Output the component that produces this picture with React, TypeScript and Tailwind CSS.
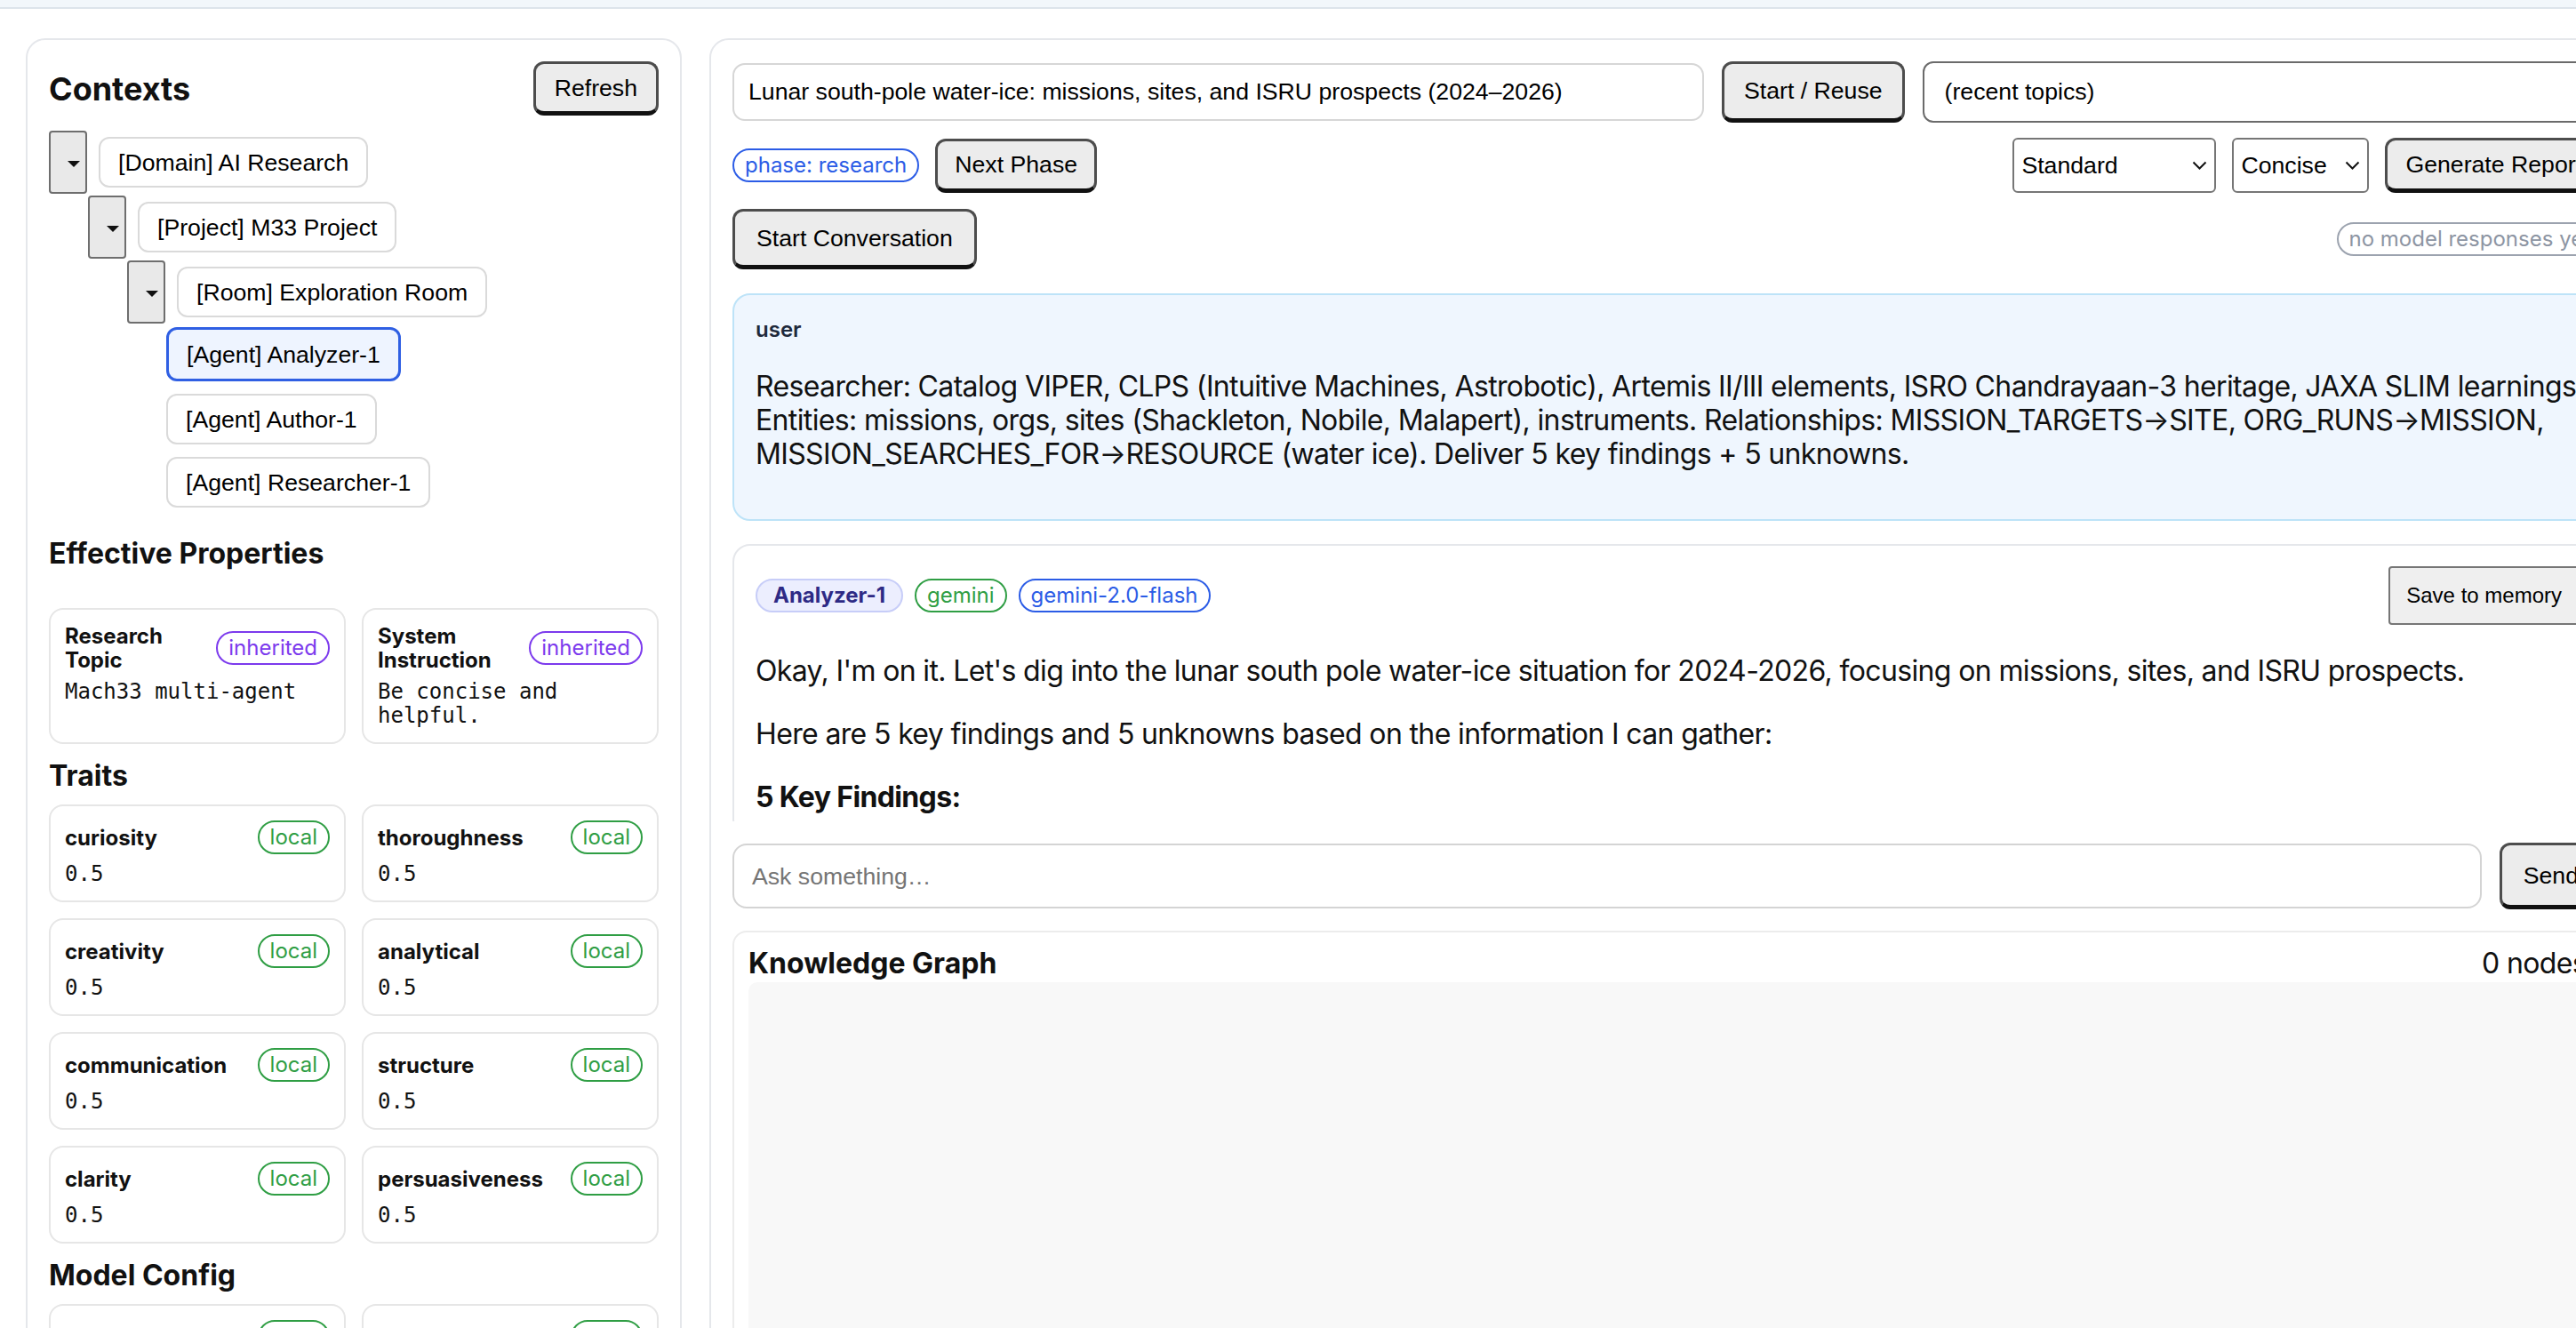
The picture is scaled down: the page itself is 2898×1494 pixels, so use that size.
import React from "react";

const inter = "font-['Inter','Noto_Sans',sans-serif]";
const arial = "font-['Liberation_Sans',Arial,sans-serif]";
const mono = "font-['DejaVu_Sans_Mono','Liberation_Mono',monospace]";

const heavyBtn =
  "shrink-0 flex items-center rounded-[12px] border-[3px] border-[#4d4d4d] border-b-[5px] border-b-[#111] bg-[#ececec] text-[26.67px] text-black " +
  arial;

function Caret() {
  return (
    <svg width="14" height="7" viewBox="0 0 14 7">
      <polygon points="0,0 14,0 7,7" fill="#111" />
    </svg>
  );
}

function Chevron() {
  return (
    <svg width="17" height="10" viewBox="0 0 17 10">
      <path d="M1.5 1.5 L8.5 8.5 L15.5 1.5" fill="none" stroke="#111" strokeWidth="2" />
    </svg>
  );
}

function Badge({ text, tone }: { text: string; tone: "purple" | "green" | "blue" | "gray" }) {
  const tones = {
    purple: "border-[#7c3aed] text-[#7c3aed]",
    green: "border-[#2f9e44] text-[#2f9e44]",
    blue: "border-[#2b5ce6] text-[#2b5ce6]",
    gray: "border-[#9ca3af] text-[#8d95a3]",
  };
  return (
    <span
      className={`shrink-0 inline-flex h-[38px] items-center rounded-full border-2 px-[12px] text-[24px] leading-none ${tones[tone]} ${inter}`}
    >
      {text}
    </span>
  );
}

function TreeRow({ depth, label }: { depth: number; label: string }) {
  const pad = ["pl-0", "pl-[44px]", "pl-[88px]"][depth];
  return (
    <div className={`flex h-[71px] items-center gap-[13px] mb-[2px] ${pad}`}>
      <div className="flex h-[71px] w-[43px] shrink-0 items-center justify-center rounded-[4px] border-2 border-[#6e6e6e] bg-[#e9e9e9] pl-[12px] pt-[4px]">
        <Caret />
      </div>
      <div
        className={`flex h-[57px] items-center rounded-[12px] border-2 border-[#dadada] bg-white px-[20px] text-[26.67px] text-black ${arial}`}
      >
        {label}
      </div>
    </div>
  );
}

function PropCard({ title, badge, tone, value }: { title: React.ReactNode; badge: string; tone: "purple" | "green"; value: string }) {
  return (
    <div className="rounded-[16px] border-2 border-[#e6e6e6] bg-white p-[16px]">
      <div className="flex items-center justify-between gap-[8px]">
        <div className={`text-[24px] font-bold leading-[27px] text-[#111] ${inter}`}>{title}</div>
        <Badge text={badge} tone={tone} />
      </div>
      <div className={`mt-[9px] text-[24px] leading-[27px] text-[#111] ${mono}`}>{value}</div>
    </div>
  );
}

const traits = [
  "curiosity",
  "thoroughness",
  "creativity",
  "analytical",
  "communication",
  "structure",
  "clarity",
  "persuasiveness",
];

function LeftPanel() {
  return (
    <aside className="w-[738px] shrink-0 rounded-[22px] border-2 border-[#e5e7eb] bg-white px-[24px] pt-[24px] pb-[40px]">
      <div className="flex h-[61px] items-center justify-between">
        <h2 className={`text-[36px] font-bold text-[#111] ${inter}`}>Contexts</h2>
        <button className={`${heavyBtn} h-[61px] px-[21px]`}>Refresh</button>
      </div>

      <div className="mt-[17px]">
        <TreeRow depth={0} label="[Domain] AI Research" />
        <TreeRow depth={1} label="[Project] M33 Project" />
        <TreeRow depth={2} label="[Room] Exploration Room" />
        <div className="flex flex-col items-start gap-[14px] pl-[132px] pt-[2px]">
          <div
            className={`flex h-[61px] items-center rounded-[12px] border-[3px] border-[#2f5fe3] bg-[#eef4ff] px-[20px] text-[26.67px] text-black ${arial}`}
          >
            [Agent] Analyzer-1
          </div>
          <div
            className={`flex h-[57px] items-center rounded-[12px] border-2 border-[#dadada] bg-white px-[20px] text-[26.67px] text-black ${arial}`}
          >
            [Agent] Author-1
          </div>
          <div
            className={`flex h-[57px] items-center rounded-[12px] border-2 border-[#dadada] bg-white px-[20px] text-[26.67px] text-black ${arial}`}
          >
            [Agent] Researcher-1
          </div>
        </div>
      </div>

      <h3 className={`mt-[32px] mb-[41px] text-[32px] font-bold leading-[40px] text-[#111] ${inter}`}>
        Effective Properties
      </h3>
      <div className="grid grid-cols-2 gap-[18px]">
        <PropCard
          title={
            <>
              Research
              <br />
              Topic
            </>
          }
          badge="inherited"
          tone="purple"
          value="Mach33 multi-agent"
        />
        <PropCard
          title={
            <>
              System
              <br />
              Instruction
            </>
          }
          badge="inherited"
          tone="purple"
          value="Be concise and helpful."
        />
      </div>

      <h3 className={`mt-[16px] mb-[12px] text-[32px] font-bold leading-[40px] text-[#111] ${inter}`}>Traits</h3>
      <div className="grid grid-cols-2 gap-[18px]">
        {traits.map((t) => (
          <PropCard key={t} title={t} badge="local" tone="green" value="0.5" />
        ))}
      </div>

      <h3 className={`mt-[16px] mb-[12px] text-[32px] font-bold leading-[40px] text-[#111] ${inter}`}>
        Model Config
      </h3>
      <div className="grid grid-cols-2 gap-[18px]">
        <PropCard title="provider" badge="local" tone="green" value="gemini" />
        <PropCard title="model" badge="local" tone="green" value="gemini-2.0-flash" />
      </div>
    </aside>
  );
}

function FakeSelect({ label, className }: { label: string; className: string }) {
  return (
    <div
      className={`flex items-center justify-between border-2 border-[#767676] bg-white text-[26.67px] text-black ${arial} ${className}`}
    >
      <span>{label}</span>
      <Chevron />
    </div>
  );
}

function RightPanel() {
  return (
    <main className="w-[2156px] shrink-0 rounded-[22px] border-2 border-[#e5e7eb] bg-white px-[24px] pt-[23px] pb-[40px]">
      {/* topic row */}
      <div className="flex h-[70px] items-center gap-[20px]">
        <div
          className={`flex h-[65px] w-[1093px] shrink-0 items-center rounded-[14px] border-2 border-[#d6d6d6] px-[16px] text-[26.67px] text-black ${arial}`}
        >
          Lunar south-pole water-ice: missions, sites, and ISRU prospects (2024–2026)
        </div>
        <button className={`${heavyBtn} h-[69px] px-[22px]`}>Start / Reuse</button>
        <div
          className={`flex h-[69px] flex-1 items-center rounded-[12px] border-2 border-[#6b6b6b] pl-[23px] text-[26.67px] text-black ${arial}`}
        >
          (recent topics)
        </div>
      </div>

      {/* phase row */}
      <div className="mt-[17px] flex h-[62px] items-center justify-between">
        <div className="flex items-center gap-[18px]">
          <Badge text="phase: research" tone="blue" />
          <button className={`${heavyBtn} h-[61px] px-[19px]`}>Next Phase</button>
        </div>
        <div className="flex items-center gap-[18px]">
          <FakeSelect label="Standard" className="h-[62px] w-[229px] rounded-[6px] pl-[8px] pr-[8px]" />
          <FakeSelect label="Concise" className="h-[62px] w-[154px] rounded-[6px] pl-[8px] pr-[8px]" />
          <button className={`${heavyBtn} h-[62px] px-[20px]`}>Generate Report</button>
        </div>
      </div>

      {/* conversation row */}
      <div className="mt-[18px] flex h-[68px] items-center justify-between">
        <button className={`${heavyBtn} h-[68px] px-[24px]`}>Start Conversation</button>
        <Badge text="no model responses yet" tone="gray" />
      </div>

      {/* messages */}
      <div className="mt-[27px] flex h-[594px] flex-col gap-[26px] overflow-hidden">
        <div className="h-[256px] shrink-0 rounded-[20px] border-2 border-[#bde3f8] bg-[#eff6fe] px-[24px] pt-[24px]">
          <div className={`text-[24px] font-semibold leading-[29px] text-[#1e293b] ${inter}`}>user</div>
          <p
            className={`mt-[31px] whitespace-nowrap text-[32px] leading-[37.8px] tracking-[-0.02em] text-[#111] ${inter}`}
          >
            Researcher: Catalog VIPER, CLPS (Intuitive Machines, Astrobotic), Artemis II/III elements, ISRO
            Chandrayaan-3 heritage, JAXA SLIM learnings.
            <br />
            Entities: missions, orgs, sites (Shackleton, Nobile, Malapert), instruments. Relationships:
            MISSION_TARGETS→SITE, ORG_RUNS→MISSION,
            <br />
            MISSION_SEARCHES_FOR→RESOURCE (water ice). Deliver 5 key findings + 5 unknowns.
          </p>
        </div>

        <div className="shrink-0 rounded-[20px] border-2 border-[#e5e7eb] bg-white px-[24px] pt-[23px] pb-[24px]">
          <div className="flex h-[66px] items-center justify-between">
            <div className="flex items-center gap-[13px]">
              <span
                className={`inline-flex h-[38px] items-center rounded-full border-2 border-[#c7cdf8] bg-[#eceefe] px-[18px] text-[24px] font-bold leading-none text-[#2e2a85] ${inter}`}
              >
                Analyzer-1
              </span>
              <Badge text="gemini" tone="green" />
              <Badge text="gemini-2.0-flash" tone="blue" />
            </div>
            <button
              className={`flex h-[66px] items-center rounded-[4px] border-2 border-[#767676] bg-[#efefef] px-[18px] text-[24px] text-black ${arial}`}
            >
              Save to memory
            </button>
          </div>
          <div className={`text-[32px] leading-[37.8px] tracking-[-0.02em] text-[#111] ${inter}`}>
            <p className="mt-[33px] whitespace-nowrap">
              Okay, I'm on it. Let's dig into the lunar south pole water-ice situation for 2024-2026, focusing on
              missions, sites, and ISRU prospects.
            </p>
            <p className="mt-[33px] whitespace-nowrap">
              Here are 5 key findings and 5 unknowns based on the information I can gather:
            </p>
            <p className="mt-[33px] font-bold">5 Key Findings:</p>
          </div>
        </div>
      </div>

      {/* ask row */}
      <div className="mt-[24px] flex h-[75px] items-center gap-[20px]">
        <div
          className={`flex h-[73px] flex-1 items-center rounded-[16px] border-2 border-[#d4d4d4] pl-[20px] text-[26.67px] text-[#757575] ${arial}`}
        >
          Ask something…
        </div>
        <button className={`${heavyBtn} h-[75px] px-[24px]`}>Send</button>
      </div>

      {/* knowledge graph */}
      <div className="mt-[24px] rounded-[16px] border-2 border-[#ececec] px-[16px] pt-[16px] pb-[16px]">
        <div className="flex items-center justify-between">
          <h3 className={`text-[32px] font-bold leading-[38px] text-[#111] ${inter}`}>Knowledge Graph</h3>
          <span className={`text-[32px] leading-[38px] tracking-[-0.02em] text-[#111] ${inter}`}>0 nodes</span>
        </div>
        <div className="mt-[2px] h-[700px] rounded-[10px] bg-[#f8f8f8]" />
      </div>
    </main>
  );
}

export default function App() {
  return (
    <div className="min-h-screen bg-white">
      <div className="h-[10px] w-full border-b-2 border-[#dde4eb] bg-[#f2f7fb]" />
      <div className="flex w-[2990px] items-start gap-[31px] pl-[29px] pt-[33px]">
        <LeftPanel />
        <RightPanel />
      </div>
    </div>
  );
}
